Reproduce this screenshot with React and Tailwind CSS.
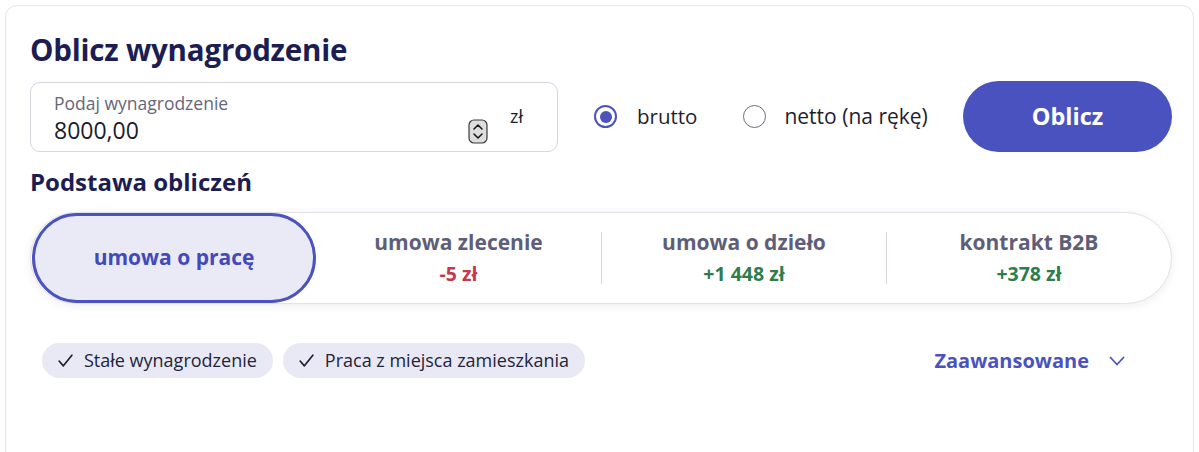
import React, { useState } from 'react';

const font = { fontFamily: '"Open Sans", "Liberation Sans", sans-serif' };

const tabs = [
  { label: 'umowa o pracę' },
  { label: 'umowa zlecenie', diff: '-5 zł', bad: true },
  { label: 'umowa o dzieło', diff: '+1 448 zł' },
  { label: 'kontrakt B2B', diff: '+378 zł' },
];

const Check = () => (
  <svg width="17" height="17" viewBox="0 0 16 16" fill="none" stroke="#1f1f33" strokeWidth="1.6" strokeLinecap="round" strokeLinejoin="round">
    <path d="M2 8.5l4 4.5L14 3" />
  </svg>
);

const Spinner = () => (
  <svg width="20" height="25" viewBox="0 0 20 25" fill="none">
    <rect x="1" y="1" width="18" height="23" rx="5" fill="#dedede" stroke="#3a3a3a" strokeWidth="1.2" />
    <path d="M6 10l4-4 4 4" stroke="#1a1a1a" strokeWidth="1.6" strokeLinecap="round" strokeLinejoin="round" />
    <path d="M6 15l4 4 4-4" stroke="#1a1a1a" strokeWidth="1.6" strokeLinecap="round" strokeLinejoin="round" />
  </svg>
);

const App = () => {
  const [mode, setMode] = useState('brutto');
  const [active, setActive] = useState(0);

  return (
    <div className="min-h-[452px] bg-white pl-[5px] pt-[5px] overflow-hidden" style={font}>
      <div className="w-[1189px] h-[460px] border border-[#e4e4ea] rounded-xl pl-[24px] pr-[21px] pt-[26px]">
        <h1 className="text-[29.5px] leading-[36px] font-bold text-[#1c1d52] tracking-[-0.2px]">Oblicz wynagrodzenie</h1>

        <div className="flex items-center mt-[13px] h-[71px]">
          <div className="relative w-[528px] h-[70px] border border-[#d5d5e3] rounded-[10px] pl-[23px] pt-[9px]">
            <div className="text-[17.5px] leading-[22px] text-[#66667a]">Podaj wynagrodzenie</div>
            <div className="text-[23px] leading-[28px] text-[#1c1c2c] mt-[2px]">8000,00</div>
            <div className="absolute left-[437px] top-[36px]"><Spinner /></div>
            <div className="absolute left-[479px] top-[21px] text-[18px] leading-[24px] text-[#1c1c2c]">zł</div>
          </div>

          <label className="flex items-center ml-[36px] cursor-pointer" onClick={() => setMode('brutto')}>
            <span className={`w-[23px] h-[23px] rounded-full border-2 flex items-center justify-center ${mode === 'brutto' ? 'border-[#4b53bc]' : 'border-[#6d6d7c]'}`}>
              {mode === 'brutto' && <span className="w-[12px] h-[12px] rounded-full bg-[#4b53bc]" />}
            </span>
            <span className="ml-[20px] text-[20.5px] text-[#1e1e30]">brutto</span>
          </label>

          <label className="flex items-center ml-[46px] cursor-pointer" onClick={() => setMode('netto')}>
            <span className={`w-[23px] h-[23px] rounded-full flex items-center justify-center ${mode === 'netto' ? 'border-2 border-[#4b53bc]' : 'border-[1.5px] border-[#6d6d7c]'}`}>
              {mode === 'netto' && <span className="w-[12px] h-[12px] rounded-full bg-[#4b53bc]" />}
            </span>
            <span className="ml-[18px] text-[21px] text-[#1e1e30]">netto (na rękę)</span>
          </label>

          <button type="button" className="ml-auto w-[209px] h-[71px] rounded-full bg-[#4a52c0] text-white text-[23.5px] font-bold">
            Oblicz
          </button>
        </div>

        <h2 className="mt-[15px] text-[24px] leading-[30px] font-bold text-[#1c1d52]">Podstawa obliczeń</h2>

        <div className="mt-[15px] h-[92px] w-[1142px] grid grid-cols-4 border border-[#e2e2e8] rounded-full shadow-[0_2px_10px_rgba(0,0,0,0.07)] bg-white">
          {tabs.map((t, i) => (
            active === i ? (
              <button key={i} type="button" onClick={() => setActive(i)} className="ml-px h-[90px] rounded-full border-[3px] border-[#4b53bc] bg-[#e9eaf6] text-[21px] font-bold text-[#4349b8]">
                {t.label}
              </button>
            ) : (
              <button key={i} type="button" onClick={() => setActive(i)} className="flex items-center h-[90px]">
                {i > 1 && <span className="w-px h-[52px] bg-[#d6d6de]" />}
                <span className="flex-1 flex flex-col items-center">
                  <span className="text-[21px] leading-[26px] font-bold text-[#5e5e79]">{t.label}</span>
                  <span className={`mt-[6px] text-[19.5px] leading-[26px] font-bold ${t.bad ? 'text-[#c23a4d]' : 'text-[#2f7d4b]'}`}>{t.diff}</span>
                </span>
              </button>
            )
          ))}
        </div>

        <div className="mt-[39px] flex items-center">
          <div className="flex items-center h-[35px] ml-[12px] pl-[15px] pr-[16px] rounded-full bg-[#e8e9f4] text-[18px] text-[#24243a]">
            <Check />
            <span className="ml-[10px]">Stałe wynagrodzenie</span>
          </div>
          <div className="flex items-center h-[35px] ml-[10px] pl-[15px] pr-[16px] rounded-full bg-[#e8e9f4] text-[18px] text-[#24243a]">
            <Check />
            <span className="ml-[10px]">Praca z miejsca zamieszkania</span>
          </div>
          <button type="button" className="ml-auto mr-[47px] flex items-center text-[20px] font-bold text-[#4a52c0]">
            Zaawansowane
            <svg className="ml-[20px]" width="16" height="10" viewBox="0 0 16 10" fill="none" stroke="#4a52c0" strokeWidth="1.8" strokeLinecap="round" strokeLinejoin="round">
              <path d="M1.5 1.5l6.5 7 6.5-7" />
            </svg>
          </button>
        </div>
      </div>
    </div>
  );
};

export default App;
